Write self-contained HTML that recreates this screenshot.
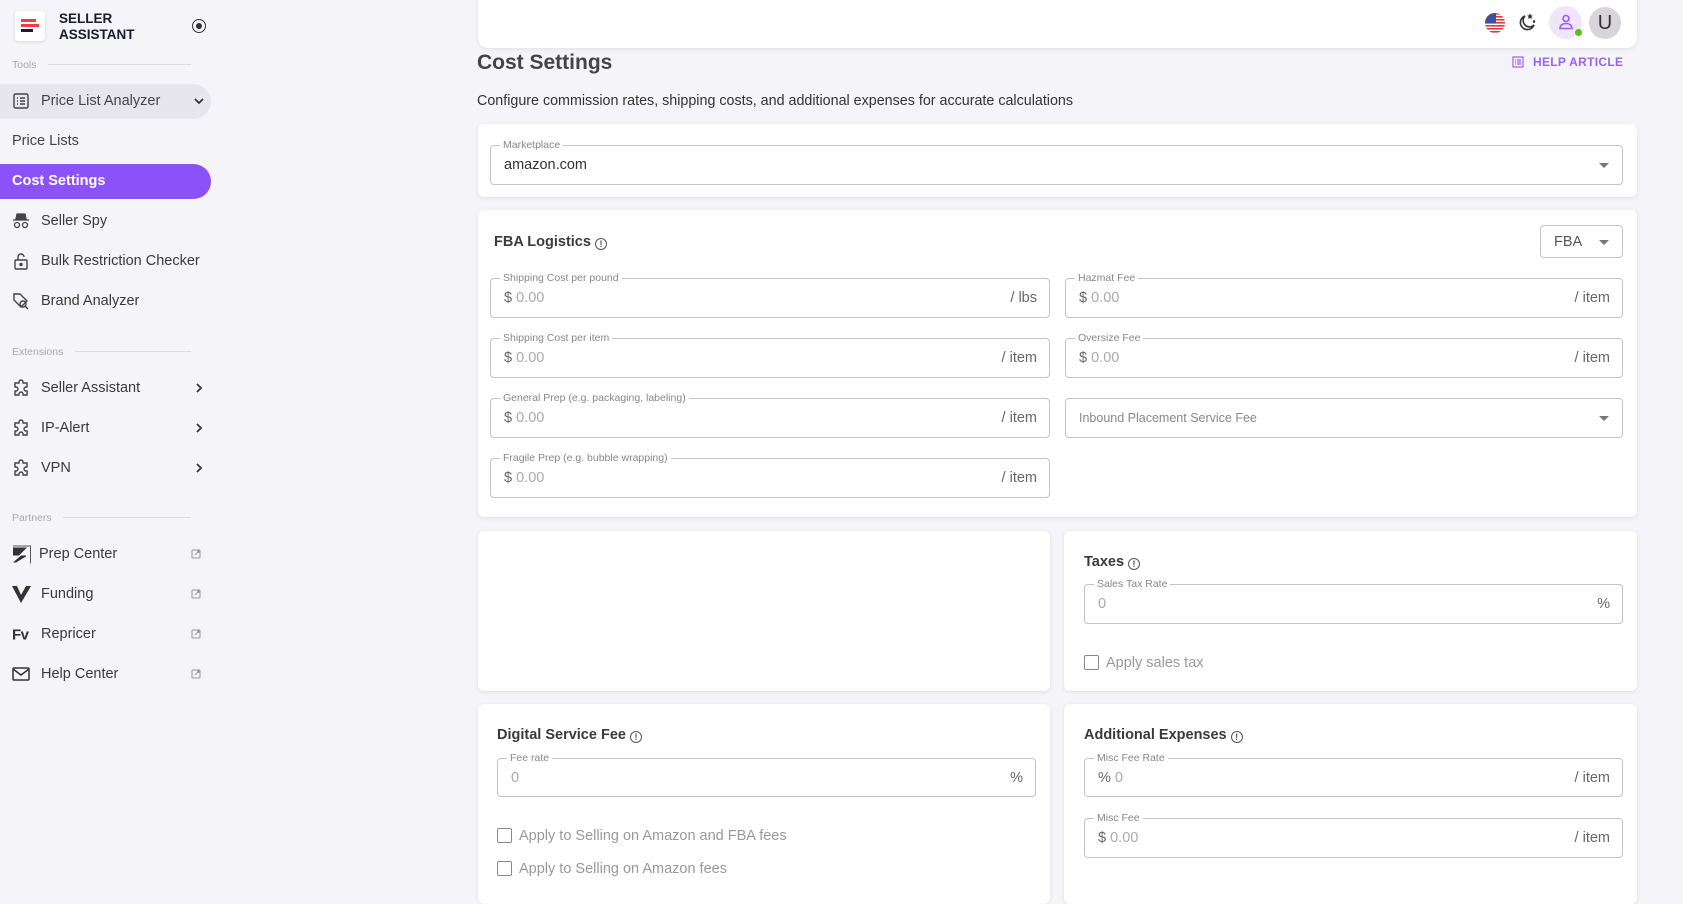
<!DOCTYPE html>
<html><head><meta charset="utf-8"><style>
*{box-sizing:border-box;margin:0;padding:0}
body{width:1683px;height:897px;overflow:hidden;background:#f4f4f9;font-family:"Liberation Sans",sans-serif;color:#333;position:relative}
.a{position:absolute}
.card{position:absolute;background:#fff;border-radius:6px;box-shadow:0 1px 4px rgba(0,0,0,.09)}
.f{position:absolute;border:1px solid #c4c4c4;border-radius:4px;background:#fff;font-size:14.5px}
.f .lb{position:absolute;top:-7px;left:9px;background:#fff;padding:0 3px;font-size:10.5px;color:#888;line-height:12px}
.f .v{position:absolute;left:13px;top:50%;transform:translateY(-50%);color:#aaa}
.f .v b{font-weight:normal;color:#666}
.f .s{position:absolute;right:12px;top:50%;transform:translateY(-50%);color:#666}
.tri{position:absolute;right:13px;top:50%;margin-top:-2px;width:0;height:0;border-left:5px solid transparent;border-right:5px solid transparent;border-top:5px solid #777}
.h{position:absolute;font-size:14.5px;font-weight:bold;color:#3a3a3a}
.i{display:inline-block;width:12px;height:12px;border:1.3px solid #555;border-radius:50%;font-size:9px;line-height:10px;text-align:center;font-weight:bold;vertical-align:-1px;margin-left:4px;color:#555}
.cb{position:absolute;width:15px;height:15px;border:1.5px solid #888;border-radius:2px}
.ct{position:absolute;font-size:14.5px;color:#999}
.nav{position:absolute;left:41px;font-size:14.5px;color:#3a3a3a;transform:translateY(-50%)}
.ic{position:absolute;left:12px;transform:translateY(-50%)}
.sec{position:absolute;left:12px;font-size:10.5px;color:#aaa;transform:translateY(-50%)}
.line{position:absolute;height:1px;background:#dcdce2}
.ext{position:absolute;left:191px;transform:translateY(-50%)}
.chev{position:absolute;left:193px;transform:translateY(-50%)}
</style></head><body>
<div class="a" style="left:15px;top:11px;width:30px;height:30px;background:#fff;border-radius:4px;box-shadow:0 1px 3px rgba(0,0,0,.12)">
<div class="a" style="left:6px;top:8px;width:15px;height:3px;background:#f03d3d"></div>
<div class="a" style="left:6px;top:13px;width:18px;height:3px;background:#f03d3d"></div>
<div class="a" style="left:6px;top:18px;width:12px;height:3px;background:#1c1c2c"></div>
</div>
<div class="a" style="left:59px;top:11px;font-size:13.5px;font-weight:bold;line-height:16px;color:#1b1b2b">SELLER<br>ASSISTANT</div>
<div class="a" style="left:192px;top:19px;width:14px;height:14px;border:1.6px solid #333;border-radius:50%"><div class="a" style="left:2.5px;top:2.5px;width:6px;height:6px;background:#333;border-radius:50%"></div></div>
<div class="sec" style="top:65px">Tools</div><div class="line" style="left:48px;top:64px;width:143px"></div>
<div class="a" style="left:0;top:84px;width:211px;height:35px;background:#e6e6ec;border-radius:0 18px 18px 0"></div>
<svg class="ic" style="top:101px" width="18" height="18" viewBox="0 0 18 18" fill="none" stroke="#444" stroke-width="1.4"><rect x="2" y="2" width="14" height="14" rx="1.5"/><path d="M5 6h1M8 6h5M5 9h1M8 9h5M5 12h1M8 12h5"/></svg>
<div class="nav" style="top:101px;color:#444">Price List Analyzer</div>
<svg class="chev" style="top:101px" width="12" height="12" viewBox="0 0 12 12" fill="none" stroke="#333" stroke-width="1.7"><path d="M2 4l4 4 4-4"/></svg>
<div class="nav" style="top:141px;left:12px;color:#444">Price Lists</div>
<div class="a" style="left:0;top:164px;width:211px;height:35px;background:#8c52fa;border-radius:0 18px 18px 0"></div>
<div class="nav" style="top:181px;left:12px;color:#fff;font-weight:bold">Cost Settings</div>
<svg class="ic" style="top:221px" width="18" height="18" viewBox="0 0 18 18" fill="none" stroke="#444" stroke-width="1.3"><path d="M5 2h8l1 5H4z" fill="#444"/><path d="M1 8h16"/><circle cx="5" cy="13" r="2.5"/><circle cx="13" cy="13" r="2.5"/></svg>
<div class="nav" style="top:221px">Seller Spy</div>
<svg class="ic" style="top:261px" width="18" height="18" viewBox="0 0 18 18" fill="none" stroke="#444" stroke-width="1.4"><rect x="3" y="8" width="12" height="9" rx="1"/><path d="M6 8V5a3 3 0 0 1 6 0"/><circle cx="9" cy="12.5" r="1" fill="#444"/></svg>
<div class="nav" style="top:261px">Bulk Restriction Checker</div>
<svg class="ic" style="top:301px" width="18" height="18" viewBox="0 0 18 18" fill="none" stroke="#444" stroke-width="1.4"><path d="M2 2h6l7 7-6 6-7-7z"/><circle cx="11" cy="12" r="3"/><path d="M13 14l3 3"/></svg>
<div class="nav" style="top:301px">Brand Analyzer</div>
<div class="sec" style="top:352px">Extensions</div><div class="line" style="left:75px;top:351px;width:116px"></div>
<svg class="ic" style="top:388px" width="18" height="18" viewBox="0 0 18 18" fill="none" stroke="#444" stroke-width="1.4"><path d="M7 3a2 2 0 0 1 4 0v1h4v4h-1a2 2 0 0 0 0 4h1v4h-4v-1a2 2 0 0 0-4 0v1H3v-4h1a2 2 0 0 0 0-4H3V4h4z"/></svg>
<div class="nav" style="top:388px">Seller Assistant</div>
<svg class="chev" style="top:388px" width="12" height="12" viewBox="0 0 12 12" fill="none" stroke="#333" stroke-width="1.7"><path d="M4 2l4 4-4 4"/></svg>
<svg class="ic" style="top:428px" width="18" height="18" viewBox="0 0 18 18" fill="none" stroke="#444" stroke-width="1.4"><path d="M7 3a2 2 0 0 1 4 0v1h4v4h-1a2 2 0 0 0 0 4h1v4h-4v-1a2 2 0 0 0-4 0v1H3v-4h1a2 2 0 0 0 0-4H3V4h4z"/></svg>
<div class="nav" style="top:428px">IP-Alert</div>
<svg class="chev" style="top:428px" width="12" height="12" viewBox="0 0 12 12" fill="none" stroke="#333" stroke-width="1.7"><path d="M4 2l4 4-4 4"/></svg>
<svg class="ic" style="top:468px" width="18" height="18" viewBox="0 0 18 18" fill="none" stroke="#444" stroke-width="1.4"><path d="M7 3a2 2 0 0 1 4 0v1h4v4h-1a2 2 0 0 0 0 4h1v4h-4v-1a2 2 0 0 0-4 0v1H3v-4h1a2 2 0 0 0 0-4H3V4h4z"/></svg>
<div class="nav" style="top:468px">VPN</div>
<svg class="chev" style="top:468px" width="12" height="12" viewBox="0 0 12 12" fill="none" stroke="#333" stroke-width="1.7"><path d="M4 2l4 4-4 4"/></svg>
<div class="sec" style="top:518px">Partners</div><div class="line" style="left:63px;top:517px;width:128px"></div>
<svg class="ic" style="top:554px" width="19" height="19" viewBox="0 0 19 19"><path d="M1 1h18v18h-1V2H1z" fill="#555"/><path d="M1 3h14L7 11H1z" fill="#333"/><path d="M1 18l8-7h5v1L4 18z" fill="#333"/></svg>
<div class="nav" style="top:554px;left:39px">Prep Center</div>
<svg class="ext" style="top:554px" width="10" height="10" viewBox="0 0 10 10" fill="none" stroke="#999" stroke-width="1"><rect x="1" y="1" width="8" height="8" rx="1"/><path d="M4 6l4-4M6 2h2v2"/></svg>
<svg class="ic" style="top:594px" width="19" height="18" viewBox="0 0 19 18"><path d="M0 1l5 0 4 9 0 8zM19 1l-5 0-5 9 0 8z" fill="#333"/></svg>
<div class="nav" style="top:594px">Funding</div>
<svg class="ext" style="top:594px" width="10" height="10" viewBox="0 0 10 10" fill="none" stroke="#999" stroke-width="1"><rect x="1" y="1" width="8" height="8" rx="1"/><path d="M4 6l4-4M6 2h2v2"/></svg>
<div class="ic" style="top:635px;font-size:15px;font-weight:bold;color:#333;letter-spacing:-0.5px">Fv</div>
<div class="nav" style="top:634px">Repricer</div>
<svg class="ext" style="top:634px" width="10" height="10" viewBox="0 0 10 10" fill="none" stroke="#999" stroke-width="1"><rect x="1" y="1" width="8" height="8" rx="1"/><path d="M4 6l4-4M6 2h2v2"/></svg>
<svg class="ic" style="top:674px" width="18" height="16" viewBox="0 0 18 16" fill="none" stroke="#333" stroke-width="1.5"><rect x="1" y="2" width="16" height="12" rx="1"/><path d="M1 3l8 6 8-6"/></svg>
<div class="nav" style="top:674px">Help Center</div>
<svg class="ext" style="top:674px" width="10" height="10" viewBox="0 0 10 10" fill="none" stroke="#999" stroke-width="1"><rect x="1" y="1" width="8" height="8" rx="1"/><path d="M4 6l4-4M6 2h2v2"/></svg>

<div class="card" style="left:478px;top:-10px;width:1159px;height:58px;border-radius:0 0 10px 10px"></div>
<svg class="a" style="left:1485px;top:13px" width="20" height="20" viewBox="0 0 20 20"><defs><clipPath id="c"><circle cx="10" cy="10" r="10"/></clipPath></defs><g clip-path="url(#c)"><rect width="20" height="20" fill="#fff"/><g fill="#e03a3e"><rect y="0" width="20" height="1.6"/><rect y="3" width="20" height="1.6"/><rect y="6" width="20" height="1.6"/><rect y="9" width="20" height="1.6"/><rect y="12" width="20" height="1.6"/><rect y="15" width="20" height="1.6"/><rect y="18" width="20" height="1.6"/></g><rect width="11" height="10.5" fill="#3d4fa0"/></g></svg>
<svg class="a" style="left:1517px;top:12px" width="20" height="20" viewBox="0 0 20 20" fill="none" stroke="#333" stroke-width="1.6"><path d="M8 4a7 7 0 1 0 9 9 6 6 0 0 1-9-9z"/><path d="M13 2l.7 1.5 1.5.3-1.1 1 .3 1.6-1.4-.8-1.4.8.3-1.6-1.1-1 1.5-.3z" fill="#333" stroke-width="0.6"/><path d="M17 8l.4.9.9.2-.7.6.2 1-.8-.5-.8.5.2-1-.7-.6.9-.2z" fill="#333" stroke-width="0.5"/></svg>
<div class="a" style="left:1549px;top:6px;width:33px;height:33px;border-radius:50%;background:#efe6fd"></div>
<svg class="a" style="left:1557px;top:13px" width="18" height="18" viewBox="0 0 18 18" fill="none" stroke="#9a5cf6" stroke-width="1.6"><circle cx="9" cy="5.5" r="3"/><path d="M3 15.5c0-3 2.5-5 6-5s6 2 6 5z"/></svg>
<div class="a" style="left:1575px;top:29px;width:7px;height:7px;border-radius:50%;background:#52c41a"></div>
<div class="a" style="left:1589px;top:7px;width:32px;height:32px;border-radius:50%;background:#d7d5d9;text-align:center;line-height:32px;font-size:20px;color:#333">U</div>

<div class="a" style="left:477px;top:51px;font-size:21px;font-weight:bold;color:#444">Cost Settings</div>
<svg class="a" style="left:1512px;top:56px" width="12" height="12" viewBox="0 0 12 12" fill="none" stroke="#9a63f5" stroke-width="1.2"><rect x="1" y="1" width="10" height="10"/><path d="M3 4h1M5 4h4M3 6h1M5 6h4M3 8h1M5 8h4"/></svg>
<div class="a" style="left:1533px;top:55px;font-size:12px;font-weight:bold;color:#9a63f5;letter-spacing:.3px">HELP ARTICLE</div>
<div class="a" style="left:477px;top:93px;font-size:14.3px;color:#333">Configure commission rates, shipping costs, and additional expenses for accurate calculations</div>

<div class="card" style="left:478px;top:124px;width:1159px;height:73px"></div>
<div class="f" style="left:490px;top:145px;width:1133px;height:40px"><span class="lb">Marketplace</span><span class="v" style="color:#333">amazon.com</span><span class="tri"></span></div>

<div class="card" style="left:478px;top:210px;width:1159px;height:307px"></div>
<div class="h" style="left:494px;top:234px">FBA Logistics<span class="i">!</span></div>
<div class="f" style="left:1540px;top:225px;width:83px;height:33px"><span class="v" style="color:#555">FBA</span><span class="tri"></span></div>
<div class="f" style="left:490px;top:278px;width:560px;height:40px"><span class="lb">Shipping Cost per pound</span><span class="v"><b>$</b> 0.00</span><span class="s">/ lbs</span></div>
<div class="f" style="left:490px;top:338px;width:560px;height:40px"><span class="lb">Shipping Cost per item</span><span class="v"><b>$</b> 0.00</span><span class="s">/ item</span></div>
<div class="f" style="left:490px;top:398px;width:560px;height:40px"><span class="lb">General Prep (e.g. packaging, labeling)</span><span class="v"><b>$</b> 0.00</span><span class="s">/ item</span></div>
<div class="f" style="left:490px;top:458px;width:560px;height:40px"><span class="lb">Fragile Prep (e.g. bubble wrapping)</span><span class="v"><b>$</b> 0.00</span><span class="s">/ item</span></div>
<div class="f" style="left:1065px;top:278px;width:558px;height:40px"><span class="lb">Hazmat Fee</span><span class="v"><b>$</b> 0.00</span><span class="s">/ item</span></div>
<div class="f" style="left:1065px;top:338px;width:558px;height:40px"><span class="lb">Oversize Fee</span><span class="v"><b>$</b> 0.00</span><span class="s">/ item</span></div>
<div class="f" style="left:1065px;top:398px;width:558px;height:40px"><span class="v" style="font-size:12.5px;color:#888">Inbound Placement Service Fee</span><span class="tri"></span></div>

<div class="card" style="left:478px;top:531px;width:572px;height:160px"></div>
<div class="card" style="left:1064px;top:531px;width:573px;height:160px"></div>
<div class="h" style="left:1084px;top:554px">Taxes<span class="i">!</span></div>
<div class="f" style="left:1084px;top:584px;width:539px;height:40px"><span class="lb">Sales Tax Rate</span><span class="v">0</span><span class="s">%</span></div>
<div class="cb" style="left:1084px;top:655px"></div><div class="ct" style="left:1106px;top:655px">Apply sales tax</div>

<div class="card" style="left:478px;top:704px;width:572px;height:200px"></div>
<div class="card" style="left:1064px;top:704px;width:573px;height:200px"></div>
<div class="h" style="left:497px;top:727px">Digital Service Fee<span class="i">!</span></div>
<div class="f" style="left:497px;top:758px;width:539px;height:39px"><span class="lb">Fee rate</span><span class="v">0</span><span class="s">%</span></div>
<div class="cb" style="left:497px;top:828px"></div><div class="ct" style="left:519px;top:828px">Apply to Selling on Amazon and FBA fees</div>
<div class="cb" style="left:497px;top:861px"></div><div class="ct" style="left:519px;top:861px">Apply to Selling on Amazon fees</div>
<div class="h" style="left:1084px;top:727px">Additional Expenses<span class="i">!</span></div>
<div class="f" style="left:1084px;top:758px;width:539px;height:39px"><span class="lb">Misc Fee Rate</span><span class="v"><b>%</b> 0</span><span class="s">/ item</span></div>
<div class="f" style="left:1084px;top:818px;width:539px;height:40px"><span class="lb">Misc Fee</span><span class="v"><b>$</b> 0.00</span><span class="s">/ item</span></div>
</body></html>
